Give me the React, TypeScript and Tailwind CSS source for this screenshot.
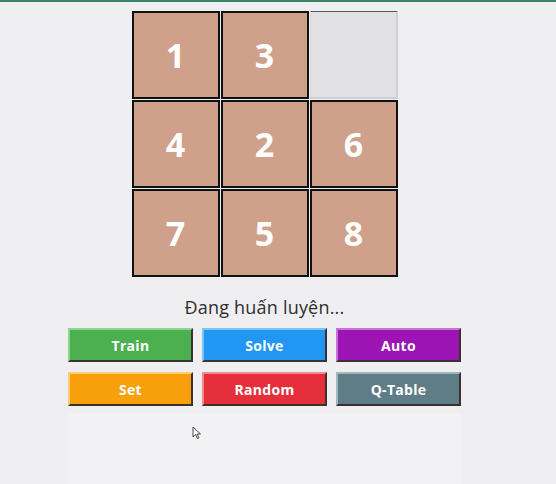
import React from 'react';

const board: (number | null)[] = [1, 3, null, 4, 2, 6, 7, 5, 8];

const buttons = [
  { label: 'Train', bg: 'bg-[#4caf50]', edge: 'border-t-[#8fd492] border-l-[#8fd492]' },
  { label: 'Solve', bg: 'bg-[#2196f3]', edge: 'border-t-[#7cc3f8] border-l-[#7cc3f8]' },
  { label: 'Auto', bg: 'bg-[#9c14b4]', edge: 'border-t-[#c873d8] border-l-[#c873d8]' },
  { label: 'Set', bg: 'bg-[#f7a00c]', edge: 'border-t-[#fbcd78] border-l-[#fbcd78]' },
  { label: 'Random', bg: 'bg-[#e5303c]', edge: 'border-t-[#f08a90] border-l-[#f08a90]' },
  { label: 'Q-Table', bg: 'bg-[#5f7d86]', edge: 'border-t-[#a3b6bc] border-l-[#a3b6bc]' },
];

export default function App() {
  return (
    <div className="relative w-[556px] h-[484px] bg-[#efeff1] overflow-hidden font-['Open_Sans',sans-serif]">
      <div className="h-[2px] bg-[#3a8464]" />

      <div className="w-[529px] flex flex-col items-center pt-[9px]">
        {/* board */}
        <div className="grid grid-cols-[88px_88px_88px] grid-rows-[88px_88px_88px] gap-px">
          {board.map((n, i) =>
            n === null ? (
              <div key={i} className="bg-[#e1e1e3] border-t border-t-[#555] border-r-2 border-r-[#cfcfd2] border-b-2 border-b-[#d0d0d3] border-l border-l-[#d8d8da]" />
            ) : (
              <div
                key={i}
                className="bg-[#cfa18a] border-2 border-[#111] flex items-center justify-center text-white font-bold text-[34px] leading-none"
              >
                {n}
              </div>
            )
          )}
        </div>

        <div className="mt-[18px] text-[18px] leading-[24px] text-[#2e2e2e] tracking-[0.2px]">Đang huấn luyện...</div>

        <div className="mt-[9px] grid grid-cols-[125px_125px_125px] gap-x-[9px] gap-y-[10px]">
          {buttons.map((b) => (
            <button
              key={b.label}
              className={`h-[34px] border-2 border-b-[#3a3030] border-r-[#3a3030] ${b.edge} ${b.bg} text-white font-bold text-[14px] tracking-[0.3px]`}
            >
              {b.label}
            </button>
          ))}
        </div>

        <div className="mt-[8px] w-[393px] h-[70px] bg-[#f2f2f4]" />
      </div>

      {/* mouse pointer */}
      <svg className="absolute left-[192px] top-[426px]" width="10" height="14" viewBox="0 0 10 14">
        <path d="M1 1 L1 11 L3.5 8.5 L5.5 12.5 L7 11.8 L5 8 L8.5 8 Z" fill="#fff" stroke="#333" strokeWidth="0.9" />
      </svg>
    </div>
  );
}
